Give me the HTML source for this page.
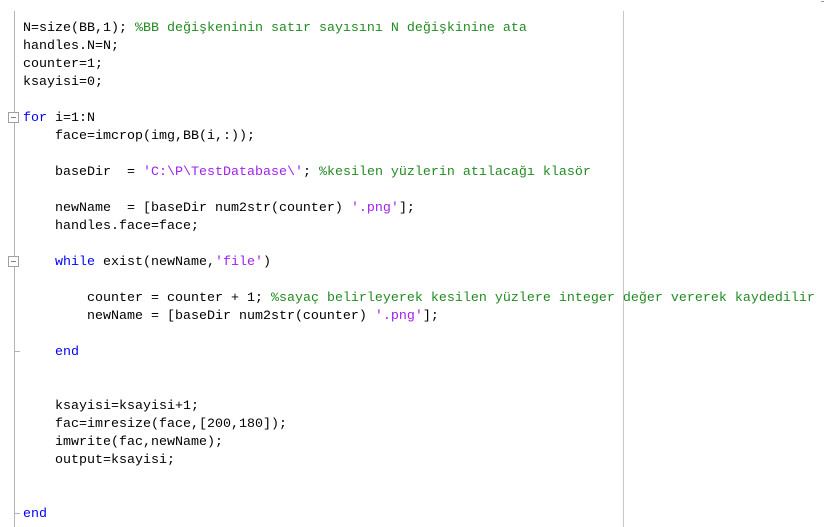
<!DOCTYPE html><html><head><style>
body{margin:0;width:824px;height:527px;background:#fff;position:relative;overflow:hidden}
.g{position:absolute;left:14px;top:11px;width:1px;height:516px;background:#b4b4b4}
.r{position:absolute;left:623px;top:11px;width:1px;height:516px;background:#c8c8c8}
.bx{position:absolute;left:8px;width:9px;height:9px;border:1px solid #a0a0a0;background:#fff}
.bx:after{content:"";position:absolute;left:2px;top:4px;width:5px;height:1px;background:#808080}
.tk{position:absolute;left:14px;width:6px;height:1px;background:#b4b4b4}
pre{position:absolute;left:23px;top:20px;margin:0;font:13.33px/18px "Liberation Mono",monospace;color:#000}
.k{color:#0000ff}.c{color:#228b22}.s{color:#a020f0}
.m{position:absolute;left:821px;top:1px;width:3px;height:1px;background:#999}
</style></head><body>
<div class="g"></div><div class="r"></div><div class="m"></div>
<div class="bx" style="top:112px"></div>
<div class="bx" style="top:256px"></div>
<div class="tk" style="top:351px"></div>
<div class="tk" style="top:513px"></div>
<pre>N=size(BB,1); <span class="c">%BB değişkeninin satır sayısını N değişkinine ata</span>
handles.N=N;
counter=1;
ksayisi=0;

<span class="k">for</span> i=1:N
    face=imcrop(img,BB(i,:));

    baseDir  = <span class="s">'C:\P\TestDatabase\'</span>; <span class="c">%kesilen yüzlerin atılacağı klasör</span>

    newName  = [baseDir num2str(counter) <span class="s">'.png'</span>];
    handles.face=face;

    <span class="k">while</span> exist(newName,<span class="s">'file'</span>)

        counter = counter + 1; <span class="c">%sayaç belirleyerek kesilen yüzlere integer değer vererek kaydedilir</span>
        newName = [baseDir num2str(counter) <span class="s">'.png'</span>];

    <span class="k">end</span>


    ksayisi=ksayisi+1;
    fac=imresize(face,[200,180]);
    imwrite(fac,newName);
    output=ksayisi;


<span class="k">end</span></pre>
</body></html>
